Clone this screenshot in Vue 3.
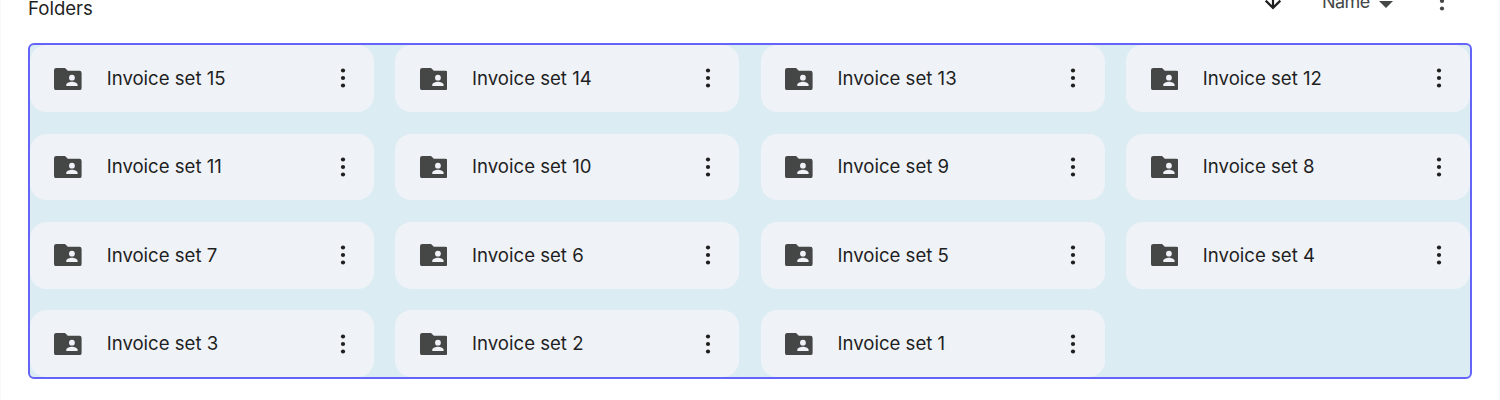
<script setup>
const folders = Array.from({ length: 15 }, (_, i) => `Invoice set ${15 - i}`)
</script>

<template>
  <main class="page">
    <header class="bar">
      <h2 class="title">Folders</h2>
      <div class="sort">
        <svg class="arrow" viewBox="0 0 22 22"><path d="M11 1V20M3.7 12.6L11 19.9L18.3 12.6" /></svg>
        <span class="sort-name">Name</span>
        <svg class="caret" viewBox="0 0 14 7"><path d="M0 0H14L7 7Z" /></svg>
        <svg class="dots" viewBox="0 0 6 20">
          <circle cx="3" cy="2.5" r="2.1" /><circle cx="3" cy="10" r="2.1" /><circle cx="3" cy="17.5" r="2.1" />
        </svg>
      </div>
    </header>
    <section class="grid">
      <article v-for="name in folders" :key="name" class="card">
        <svg class="folder" viewBox="0 0 20 16">
          <path fill-rule="evenodd" d="M1.6 0H8L10 2H18.4Q20 2 20 3.6V14.4Q20 16 18.4 16H1.6Q0 16 0 14.4V1.6Q0 0 1.6 0ZM13 4.9a2.1 2.1 0 1 0 0 4.2a2.1 2.1 0 1 0 0-4.2ZM8.9 13H17.1V12.2C17.1 10.7 14.5 10 13 10S8.9 10.7 8.9 12.2Z" />
        </svg>
        <span class="name">{{ name }}</span>
        <svg class="dots" viewBox="0 0 6 20">
          <circle cx="3" cy="2.5" r="2.1" /><circle cx="3" cy="10" r="2.1" /><circle cx="3" cy="17.5" r="2.1" />
        </svg>
      </article>
    </section>
  </main>
</template>

<style>
body { margin: 0; background: #fff; }
</style>

<style scoped>
.page {
  box-sizing: border-box;
  height: 400px;
  padding: 0 26px 0 27px;
  border-left: 1px solid #f8f9fd;
  border-right: 2px solid #f8f9fd;
  overflow: hidden;
  background: #fff;
  color: #1f1f1f;
  font-family: Inter, Roboto, "Liberation Sans", sans-serif;
}
.bar {
  display: flex;
  justify-content: space-between;
  height: 43px;
}
.title {
  margin: -4px 0 0;
  font-size: 18.6px;
  line-height: 24px;
  font-weight: 400;
}
.sort {
  display: flex;
  align-items: center;
  height: 22px;
  margin: -9px 27px 0 0;
}
.arrow {
  width: 22px;
  height: 22px;
  margin: -6px 38px 0 0;
  fill: none;
  stroke: #1f1f1f;
  stroke-width: 2.2;
}
.sort-name {
  width: 48px;
  font-size: 18px;
  line-height: 22px;
  font-weight: 400;
  letter-spacing: -0.6px;
  color: #444746;
}
.caret {
  width: 14px;
  height: 7px;
  margin: 5px 46px 0 9px;
  fill: #444746;
}
.dots {
  width: 6px;
  height: 20px;
  fill: #1f1f1f;
}
.sort .dots { fill: #444746; margin-top: -2px; }
.grid {
  box-sizing: border-box;
  height: 336px;
  display: grid;
  grid-template-columns: repeat(4, 1fr);
  grid-template-rows: 66.7px 66.3px 66.9px 66.5px;
  row-gap: 21.85px;
  column-gap: 21.6px;
  border: 2px solid #6464f8;
  border-radius: 6px;
  background: #dcecf3;
}
.card {
  display: flex;
  align-items: center;
  padding: 0 28.2px 0 24.4px;
  border-radius: 16.5px;
  background: #eff3f8;
}
.folder {
  width: 27.6px;
  height: 22.1px;
  margin: 0.5px 24.7px 0 0;
  fill: #444746;
}
.name {
  flex: 1;
  margin-top: -1px;
  font-size: 18.6px;
  line-height: 26px;
  white-space: nowrap;
}
</style>
